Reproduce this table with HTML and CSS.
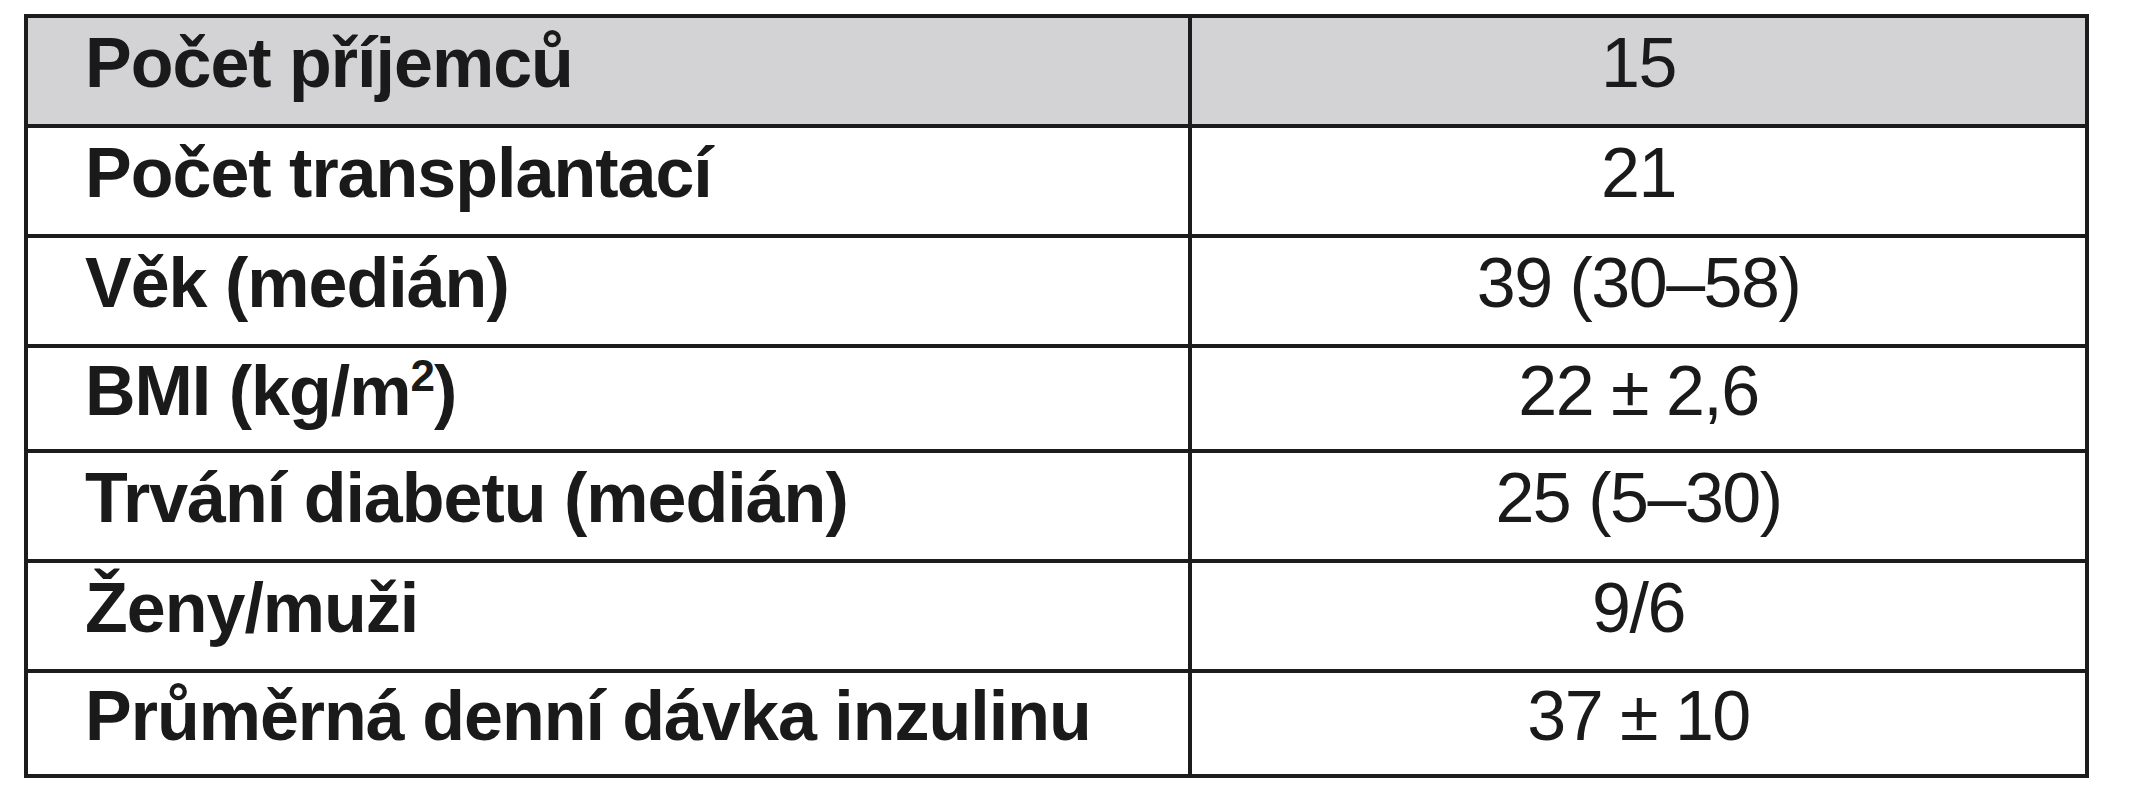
FILE: index.html
```html
<!DOCTYPE html>
<html lang="cs">
<head>
<meta charset="utf-8">
<title>Tabulka</title>
<link rel="stylesheet" href="styles.css">
</head>
<body>
<table class="data">
  <tr class="head">
    <td class="label">Počet příjemců</td>
    <td class="value">15</td>
  </tr>
  <tr>
    <td class="label">Počet transplantací</td>
    <td class="value">21</td>
  </tr>
  <tr>
    <td class="label">Věk (medián)</td>
    <td class="value">39 (30–58)</td>
  </tr>
  <tr class="short">
    <td class="label">BMI (kg/m<sup>2</sup>)</td>
    <td class="value">22 ± 2,6</td>
  </tr>
  <tr>
    <td class="label">Trvání diabetu (medián)</td>
    <td class="value">25 (5–30)</td>
  </tr>
  <tr>
    <td class="label">Ženy/muži</td>
    <td class="value">9/6</td>
  </tr>
  <tr class="short">
    <td class="label">Průměrná denní dávka inzulinu</td>
    <td class="value">37 ± 10</td>
  </tr>
</table>
</body>
</html>
```
FILE: styles.css
```css
html, body {
  margin: 0;
  padding: 0;
  background: #ffffff;
}

body {
  padding: 14px 0 0 24px;
  font-family: "Liberation Sans", Arial, sans-serif;
  color: #1a1a1a;
}

.data {
  border-collapse: collapse;
  border: 4px solid #1c1c1c;
  width: 2065px;
}

.data td {
  border: 4px solid #1c1c1c;
  height: 110px;
  box-sizing: border-box;
  padding: 0 0 16px 0;
  vertical-align: middle;
  font-size: 70px;
  line-height: 1;
}

.data tr.short td {
  height: 105px;
}

.head td {
  background: #d3d3d5;
}

.label {
  width: 1164px;
  padding-left: 57px !important;
  font-weight: bold;
  letter-spacing: -1px;
}

.value {
  text-align: center;
  font-weight: normal;
  letter-spacing: -1.5px;
}

.label sup {
  font-size: 44px;
  line-height: 0;
  vertical-align: 24px;
}
```
